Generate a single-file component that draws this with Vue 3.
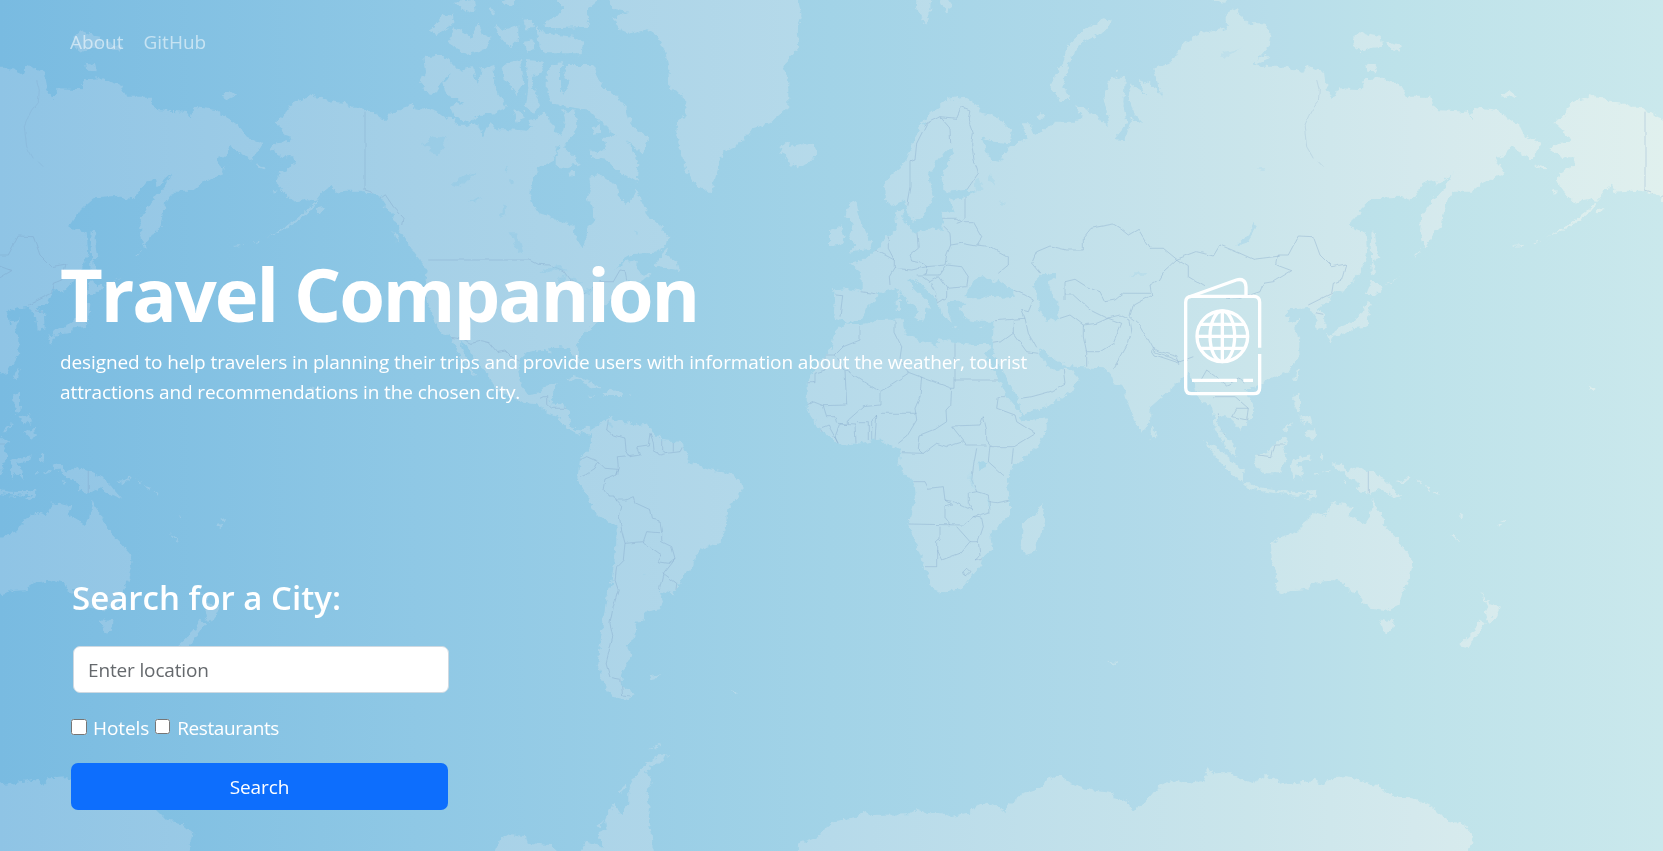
<script setup>
import { ref } from 'vue'

const city = ref('')
const hotels = ref(false)
const restaurants = ref(false)

// Every ring is a list of [dx, dy, points] parts given in thirds of a pixel.
const ring = (...parts) =>
  'M' +
  parts
    .map(([dx, dy, pts]) =>
      pts
        .trim()
        .split(/\s+/)
        .map((p) => {
          const [x, y] = p.split(',').map(Number)
          return `${((x + dx) / 3).toFixed(1)},${((y + dy) / 3).toFixed(1)}`
        })
        .join('L')
    )
    .join('L')

const B = [1200, 0]
const C = [2340, 0]
const D = [3660, 0]
const F = [1440, 1200]
const G = [2340, 1200]
const H = [3600, 1200]
const group = (o, list) => list.map((p) => ring([...o, p])).join(' ')

const land = [
  group(B, [
    // North America
    '-377,366 -360,356 -345,345 -335,320 -315,303 -288,298 -268,282 -252,292 -230,295 -200,305 -170,308 -145,320 -120,320 -100,335 -85,337 -65,352 -45,358 -30,342 0,330 20,322 38,308 45,325 75,330 90,322 110,335 130,350 160,355 175,380 200,380 215,370 240,378 248,412 262,380 275,370 290,388 330,388 380,392 395,380 385,362 410,360 430,335 445,355 455,372 470,395 478,408 490,390 495,360 490,330 525,335 532,370 525,400 500,425 485,445 470,435 462,480 435,495 415,510 395,540 388,580 395,605 412,640 440,645 480,665 520,675 525,710 548,745 560,715 555,690 580,665 578,620 562,600 572,570 568,530 600,525 630,545 650,555 657,590 680,612 700,590 708,570 730,610 745,650 785,685 805,710 800,735 765,758 700,762 670,780 645,808 680,785 710,780 708,805 720,820 755,822 725,845 705,850 690,840 660,855 650,875 655,888 630,900 608,925 590,970 560,995 535,1020 530,1040 540,1065 538,1098 520,1068 510,1050 480,1042 450,1045 455,1058 420,1050 385,1055 360,1075 355,1120 365,1160 385,1185 420,1180 432,1155 470,1150 462,1180 450,1210 480,1213 508,1225 506,1265 525,1290 540,1295 560,1280 575,1292 570,1306 550,1295 535,1303 510,1292 490,1275 475,1250 445,1238 410,1213 370,1208 330,1188 290,1170 275,1150 270,1130 240,1095 215,1060 200,1035 180,1028 195,1070 215,1105 230,1130 215,1120 190,1085 170,1050 152,1012 115,990 100,960 85,910 75,860 80,812 65,790 40,760 20,720 0,690 -15,660 -40,620 -60,590 -90,578 -120,572 -160,572 -195,575 -205,555 -230,575 -250,602 -275,598 -320,605 -345,580 -370,545 -360,515 -335,505 -315,490 -320,472 -350,472 -392,448 -370,430 -330,425 -320,410 -345,405 -355,385',
    '765,800 785,760 805,740 800,765 830,785 835,810 805,805',
    '440,215 460,192 490,190 480,215 480,260 490,285 510,240 490,235 500,195 535,195 580,195 590,225 610,265 650,290 680,330 690,370 745,415 725,460 680,420 700,460 715,490 710,545 650,510 620,480 570,470 570,455 620,450 610,410 650,410 600,360 570,330 500,320 460,310 440,270',
    '130,250 165,205 190,210 220,205 235,260 245,205 280,195 285,265 320,320 280,340 240,345 205,365 160,345 150,320 190,305 140,285',
    '70,170 110,165 140,175 168,205 130,240 110,275 90,285 60,250 75,215',
    '305,200 330,185 360,180 365,220 375,250 350,285 330,255 310,235',
    '380,180 435,185 425,215 395,235 400,260 420,310 405,340 375,320 385,240',
    '410,75 430,100 520,110 550,125 545,160 430,160 415,130',
    '430,75 470,85 560,80 570,50 555,35 590,5 600,-20 440,-20 490,20 470,50 440,60',
    '90,95 120,50 160,38 160,75 110,105',
    '145,130 160,80 210,110 235,65 250,105 275,110 260,145 200,165',
    '285,75 310,90 355,75 355,120 330,145 295,105',
    '370,55 400,60 405,85 375,85',
    '375,125 400,120 400,150 380,155',
    '165,5 225,0 230,30 200,38',
    '270,20 285,40 280,50 268,30',
    '305,0 345,-10 345,20 320,15',
    '470,455 490,435 510,460 540,490 500,505 470,500',
    '575,385 600,375 600,400 580,405',
    '340,335 365,330 378,355 350,365',
    '505,518 525,515 520,528 508,530',
    // Greenland
    '615,-20 640,30 690,35 640,55 655,85 690,100 740,88 775,110 795,150 805,200 808,265 850,285 860,345 835,360 828,400 840,450 860,510 890,560 935,580 950,520 970,455 1010,440 1055,385 1110,370 1165,320 1165,240 1150,200 1195,140 1190,90 1205,50 1190,-20',
    '1138,440 1160,425 1170,440 1210,430 1235,425 1252,460 1225,490 1195,502 1160,485 1165,465 1145,462',
    // Caribbean
    '495,1140 520,1128 570,1145 605,1165 575,1165 545,1142',
    '610,1182 630,1166 670,1180 660,1188 615,1188',
    '565,1183 585,1186 570,1190',
    '685,1183 698,1184 688,1188',
    // Aleutians and coastal islands
    '-205,560 -235,590 -280,645 -345,690 -400,712 -340,680 -290,640 -245,600',
    '-420,722 -440,728 -438,730 -418,725',
    '-470,734 -500,738 -498,740 -468,737',
    '-248,625 -228,620 -235,635 -250,642',
    '-435,495 -405,500 -402,508 -425,503',
    '-385,570 -370,572 -378,582',
    '40,757 85,785 88,797 60,785',
    '-20,690 -8,705 -3,728 -15,715'
  ]),
  group(F, [
    '333,95 350,72 385,62 395,50 405,60 430,65 480,75 505,70 515,90 545,120 600,125 625,165 620,190 640,190 690,208 735,215 780,240 788,265 775,290 745,325 740,385 715,430 680,440 645,465 640,500 610,530 590,570 575,580 540,573 552,605 540,628 495,635 490,662 465,665 468,685 460,720 440,735 457,765 435,800 422,830 430,860 465,885 440,900 400,890 370,850 352,790 365,700 378,600 395,540 408,450 410,380 350,345 320,285 292,235 300,180 332,145',
    '508,828 540,823 530,835 515,838',
    '755,870 770,875 777,885 765,880',
    '30,1380 60,1320 90,1303 135,1308 140,1328 210,1335 265,1380',
    '385,1380 355,1300 380,1290 375,1260 400,1208 425,1245 445,1215 445,1170 470,1125 480,1105 530,1070 570,1062 500,1110 515,1145 500,1180 510,1210 505,1240 515,1300 520,1380',
    '300,1360 320,1325 375,1345 380,1380 300,1380',
    '420,1175 435,1150 440,1165 425,1180',
    '345,1278 372,1265 360,1280',
    '510,1048 540,1032 530,1045'
  ]),
  // Africa
  ring([
    ...C,
    '200,970 235,975 300,960 370,958 375,985 370,1000 400,1015 470,1040 480,1015 530,1030 590,1035 630,1035 615,1062 650,1130 680,1190 720,1240 725,1262 800,1255 800,1290 770,1340 700,1400 680,1435 690,1500 690,1545 630,1600 637,1650 608,1670 600,1700 545,1765 470,1778 452,1750 415,1650 385,1575 405,1500 400,1450 355,1395 362,1350 320,1335 300,1315 240,1330 175,1335 120,1290 80,1230 80,1150 100,1110 155,1045 165,1000 190,975'
  ]),
  // Europe and Asia
  ring(
    [
      ...C,
      '162,868 200,865 245,872 245,820 210,790 245,785 265,765 290,750 320,710 350,690 345,640 370,625 370,660 385,685 410,700 450,685 488,690 485,635 525,640 510,600 555,590 590,575 560,572 495,578 485,520 525,455 510,440 490,460 445,520 450,560 460,590 430,650 400,668 385,640 375,600 340,618 315,600 312,545 370,495 405,410 440,350 500,300 550,290 590,315 600,340 650,350 695,390 690,430 640,425 605,415 630,480 660,485 690,440 740,415 725,370 750,370 765,405 830,365 890,365 910,350 885,315 930,335 990,380 970,290 995,230 1035,230 1030,310 1040,370 1000,418 1035,420 1055,355 1090,370 1060,340 1045,290 1055,250 1100,285 1075,240 1110,250 1145,290 1120,205 1175,190 1200,140 1260,100 1340,85'
    ],
    [
      ...D,
      '20,75 20,40 50,22 80,70 130,70 152,100 145,140 100,190 130,200 200,200 250,222 260,195 315,215 320,260 340,298 355,265 430,268 430,238 480,235 540,255 560,290 630,290 645,330 740,335 755,358 760,320 830,330 900,380 915,410 965,430 935,480 870,435 860,465 830,475 852,522 790,545 755,575 700,575 675,610 665,680 640,700 615,745 600,700 603,650 640,600 675,560 695,520 650,560 645,540 615,545 580,598 540,590 460,595 425,625 385,680 440,700 445,760 420,820 370,875 340,870 325,905 290,925 315,945 317,985 290,990 285,950 265,920 230,925 200,935 210,970 240,955 225,985 238,1020 238,1060 205,1115 130,1145 75,1170 100,1210 103,1250 60,1290 40,1265 15,1245 0,1250 -10,1275 15,1310 40,1330 48,1370 20,1345 5,1310 -15,1290 -20,1240 -30,1210 -55,1210'
    ],
    [
      ...C,
      '1245,1150 1225,1120 1200,1140 1170,1170 1112,1220 1110,1270 1085,1298 1060,1250 1040,1200 1030,1155 1000,1150 990,1115 970,1105 880,1100 850,1095 800,1060 775,1045 790,1085 830,1115 860,1100 895,1135 880,1170 820,1210 725,1245 715,1200 680,1130 650,1085 635,1040 640,1000 640,965 600,965 560,960 540,925 560,905 540,905 500,905 515,965 490,950 470,900 430,860 395,832 385,845 440,900 455,930 435,925 435,950 400,950 420,935 390,910 350,865 330,870 295,880 285,900 260,920 250,950 200,968 160,955 165,900'
    ]
  ),
  group(C, [
    '205,615 230,605 235,640 250,680 275,730 270,750 205,758 225,735 208,710 220,670 195,650',
    '150,695 185,675 197,710 180,735 150,738',
    '405,5 420,-20 455,-20 450,30 435,75 420,45',
    '480,0 490,-20 515,15 500,40',
    '810,265 825,225 850,190 860,140 910,90 970,58 992,62 985,88 900,130 865,190 850,260 870,300 840,300',
    '773,350 783,338 793,348 785,360',
    '1005,212 1015,205 1020,215 1010,220',
    '350,900 360,897 360,930 350,930',
    '352,880 358,872 360,892',
    '398,952 435,948 425,965',
    '510,982 535,982 530,988',
    '590,980 612,975 600,985'
  ]),
  group(D, [
    '-30,-20 30,-20 10,8 -20,5',
    '400,110 420,93 450,105 482,110 487,140 450,145 425,157 405,142',
    '498,126 545,138 542,155 510,147',
    '438,188 465,193 470,214 442,212',
    '842,290 870,270 889,285 860,297',
    '105,180 140,165 148,175 110,190',
    '455,690 465,700 475,775 460,780 465,820 455,822 452,740',
    '455,840 488,865 465,885 438,885',
    '440,905 452,910 440,980 400,985 380,1000 335,1008 345,990 390,970 425,940',
    '322,1005 340,1010 335,1032',
    '355,997 370,995 365,1005',
    '222,1140 232,1105 238,1110 230,1140',
    '220,1185 240,1180 240,1225 235,1240 220,1210',
    '72,1165 95,1158 90,1170',
    '945,493 975,500 972,510',
    '488,860 515,845 545,826 515,848',
    '585,765 605,748 590,768',
    '1108,1160 1127,1168 1115,1177'
  ]),
  group(G, [
    '1112,80 1130,95 1128,118 1112,115',
    '785,315 795,350 780,410 762,458 740,465 722,440 730,365 765,345',
    '988,783 1012,785 1002,797',
    '45,1360 60,1330 125,1305 135,1285 170,1260 235,1250 250,1232 270,1245 390,1243 415,1230 445,1240 490,1240 515,1252 565,1240 585,1220 620,1205 665,1225 675,1240 685,1215 730,1180 790,1160 800,1140 835,1127 865,1145 930,1170 1000,1180 1005,1195 1045,1205 1055,1232 1090,1215 1130,1165 1180,1140 1215,1150 1270,1143 1285,1105 1300,1120 1350,1120 1370,1130 1420,1150 1460,1125 1510,1155 1605,1140 1630,1155 1645,1135 1700,1132 1790,1155 1840,1190 1900,1192 1960,1222 2000,1262 2040,1268 2080,1302 2065,1360 2065,1400 20,1400'
  ]),
  group(H, [
    '15,122 45,140 100,185 130,210 128,245 95,225 55,180',
    '128,250 150,250 180,262 225,268 228,280 180,272 135,262',
    '232,270 270,275 310,276 350,272 345,281 290,284 232,279',
    '315,295 345,278 352,284 325,300',
    '268,286 290,290 285,295',
    '162,165 200,160 245,110 268,125 250,140 262,170 240,220 200,220 170,205',
    '278,180 332,166 327,182 288,190 302,200 308,240 288,217 282,242 270,210',
    '395,190 425,192 430,208 440,215 470,200 510,215 550,235 575,260 605,297 570,285 540,265 510,282 470,270 480,250 440,230 410,205',
    '585,243 615,240 626,225 632,235 612,250',
    '305,100 330,95 345,80 348,105 335,122 320,105',
    '298,50 330,43 337,72 320,62 312,74',
    '286,20 298,25 298,38 288,35',
    '250,92 275,66 274,76 254,96',
    '360,165 370,158 368,185 360,180',
    '362,213 392,214 390,221',
    '345,217 355,216 352,223',
    '428,240 436,242 434,256',
    '125,207 135,206 133,215',
    '213,430 245,410 295,395 310,365 350,335 380,345 400,310 455,318 445,345 495,375 508,355 518,297 530,330 545,345 560,385 600,425 632,465 637,500 625,545 605,580 598,615 560,632 540,628 500,622 480,590 470,570 450,580 435,550 400,540 345,548 315,568 280,570 245,583 228,575 232,540 215,480',
    '388,306 410,303 405,310',
    '540,658 560,665 582,660 575,690 562,700 550,690',
    '842,575 870,610 900,620 888,645 870,670 858,652 855,640 865,620',
    '840,660 857,670 835,700 805,745 775,738 820,695',
    '750,403 762,407 782,427 768,421',
    '648,238 660,244 664,254',
    '670,258 692,262 690,270',
    '698,270 718,283 714,288',
    '888,376 907,371 902,384',
    '903,363 919,356 914,367',
    '775,343 787,350 782,356'
  ])
].join(' ')

const seas = [
  group(C, [
    '556,892 580,840 610,825 640,850 655,840 700,870 708,890 650,895 600,892',
    '760,850 790,820 825,815 825,835 800,850 820,890 835,910 835,960 800,962 780,930'
  ]),
  group(D, ['48,738 85,705 103,665 110,680 80,728']),
  group(G, ['595,185 622,183 620,205 598,208'])
].join(' ')

const lakes = [
  group(B, [
    '65,435 100,410 140,415 130,440 110,465 85,455 95,440',
    '155,555 180,530 230,515 195,548 170,562',
    '200,610 230,592 248,596 215,605',
    '325,700 350,700 370,755 355,760 340,720',
    '418,818 445,798 485,795 500,812 465,808 440,820',
    '470,865 480,830 500,825 490,860',
    '505,830 545,845 540,870 520,850',
    '538,880 562,868 580,862 560,885',
    '700,695 718,692 712,702',
    '310,510 325,500 320,515',
    '330,540 340,545 332,552',
    '300,650 312,610 320,620 308,655'
  ]),
  group(C, [
    '1045,835 1060,820 1105,820 1100,827 1060,828',
    '580,545 600,540 608,565 590,575',
    '628,520 645,540 640,555 628,540',
    '655,600 675,610 665,615'
  ]),
  group(D, ['115,500 138,510 120,520', '0,160 60,145 40,160 10,175']),
  group(G, ['570,215 575,245 588,270 580,262 568,240', '622,290 630,300 632,335 625,315']),
  group(F, ['385,68 400,72 398,84 390,82', '485,520 495,522 490,528'])
].join(' ')

const borders = [
  group(B, [
    '-105,335 -105,570 -88,575 -68,600 -45,583 -20,620 12,655 8,675',
    '85,780 390,780 415,793 450,795 490,812 510,840 545,865 552,882 575,865 600,845 640,845 660,810 675,812 680,838',
    '150,1012 190,1018 215,1030 245,1022 268,1028 290,1055 315,1050 340,1075 358,1082',
    '420,1195 430,1190 440,1190 440,1210 455,1225 475,1225 505,1225'
  ]),
  group(F, [
    '385,62 380,90 400,105 435,115 438,150 450,170 480,165 470,140 505,135 510,100',
    '438,168 412,170 415,205 405,228 375,240 370,265 385,288 405,288 408,300 435,300 460,290 465,308 512,330 518,358 540,362 545,400 545,425 575,440 585,475 565,490 535,485 545,465 495,430 490,425 500,395 540,398',
    '300,180 320,170 355,185 375,205 412,208 410,225',
    '355,185 345,205 315,225 300,232',
    '408,300 425,320 418,350 425,390 435,430 490,425',
    '435,430 430,480 410,500 405,540 415,570 400,620 390,670 398,710 378,790 390,832 422,838 428,885 450,888',
    '585,475 550,520 590,550 588,570',
    '550,520 538,570',
    '510,100 520,125 522,155 540,165 560,160 600,155 608,140',
    '545,122 545,150 560,160',
    '580,125 580,155'
  ]),
  group(C, [
    '555,590 555,625 555,655 545,665 580,665 605,710 590,735 630,740 685,770 685,795 655,820',
    '410,690 415,745 390,765 395,780 430,788 440,800 495,795 500,765 512,735 510,700 490,680',
    '512,735 545,730 590,738',
    '325,710 325,745 343,780 343,805 328,830 330,855',
    '343,805 395,810 440,800 435,825 410,825',
    '285,750 325,770 343,780',
    '435,825 480,825 500,795 545,800 565,830 560,860 500,865 475,830 450,845 430,830',
    '500,865 500,890 470,910 470,880 455,850',
    '245,875 290,882',
    '165,885 188,887 180,950',
    '380,615 390,560 390,485 405,480 410,430 440,370 480,350 510,385 512,435',
    '480,350 530,355 545,320 570,330 565,360 580,400 575,430 582,480 595,520 560,570',
    '485,655 530,655 545,665 530,670',
    '780,820 755,790 770,755 810,738 860,750 910,750 910,710 930,685 1000,672 1020,685 1045,705 1075,688 1110,745 1150,745 1190,778 1250,755 1300,768 1320,735 1380,760 1420,778 1500,768',
    '1190,778 1150,815 1135,840 1110,855 1115,885 1060,915 1050,950 1080,975 1100,1010 1125,1055 1200,1085 1240,1070',
    '1190,778 1225,800 1225,830 1275,860',
    '855,900 855,845 885,838 920,860 960,875 975,905 1005,900 1030,880 1110,880',
    '855,885 880,885 930,930 980,955 1020,945 1050,960',
    '840,955 870,945 910,975 910,1010 920,1060 920,1100',
    '910,975 950,970 985,955 1025,970 1000,1030 960,1055 920,1055',
    '1050,960 1055,990 1045,1030 1000,1110',
    '1120,1045 1140,1055 1190,1070 1200,1090 1125,1065 1115,1050',
    '700,870 735,885 760,900 745,935 725,930 735,955 645,962',
    '735,955 745,1000 770,1045',
    '700,962 700,1000 665,1025 635,1030',
    '700,1000 740,1055 775,1060',
    '720,1195 755,1190 810,1175 855,1150 850,1110',
    '345,958 345,1000 365,1040 360,1075 380,1115 420,1130 515,1165 525,1165 525,1030',
    '525,1140 655,1140',
    '240,980 240,1020 190,1040 165,1065 190,1105 300,1175 385,1120',
    '80,1148 105,1148 105,1120 135,1110 135,1065 165,1065',
    '195,1110 200,1215 130,1217 100,1205 80,1215',
    '300,1175 300,1215 250,1220 205,1260 205,1272 170,1270 165,1250 140,1250 130,1217',
    '425,1130 420,1190 405,1225 410,1260 380,1310 355,1330',
    '515,1165 512,1215 498,1230 500,1265 470,1285 420,1305 415,1345 430,1360 365,1358',
    '300,1240 410,1240',
    '515,1278 600,1275 610,1250 620,1290 620,1320 635,1340 700,1340 765,1300 710,1265 705,1245 650,1225 655,1190 675,1190',
    '515,1278 560,1335 620,1335',
    '430,1360 470,1330 500,1340 550,1325',
    '590,1345 580,1400 575,1440 590,1475 565,1480 565,1510 575,1530 520,1505 495,1500 490,1460 445,1465 435,1445 400,1445',
    '630,1335 625,1385 675,1430',
    '625,1505 650,1508 690,1500',
    '590,1475 625,1485 630,1535 580,1550 550,1575 385,1572',
    '495,1500 515,1515 495,1520 495,1555 510,1575',
    '480,1580 480,1620 470,1625 470,1700 435,1700',
    '470,1650 485,1680 540,1660 570,1625 530,1580',
    '570,1625 595,1625 610,1580 605,1555 580,1550',
    '595,1625 600,1665 588,1680 605,1675',
    '550,1715 560,1705 570,1715 555,1728 550,1715',
    '700,1345 695,1395',
    '140,1320 120,1285 145,1275 175,1330',
    '175,1335 165,1310 180,1272 225,1275 228,1330',
    '228,1265 265,1265 265,1320',
    '275,1320 275,1265 290,1245 285,1320'
  ]),
  group(D, [
    '175,765 170,795 215,812 160,845 130,850 120,875 60,895 0,890',
    '175,765 205,765 235,708 280,710 300,765 335,800 378,792 365,840 340,850 335,880 265,915',
    '285,935 310,940',
    '-60,1145 -40,1110 -20,1125 20,1155 60,1135 75,1150',
    '-20,1190 45,1190 85,1225 80,1260 35,1250 50,1225 85,1225'
  ]),
  group(H, ['170,165 215,170 225,135 255,135', '505,212 505,280', '55,40 60,80 80,115'])
].join(' ')

const river = group(D, ['290,240 298,270 295,305 275,330 265,350 253,380 260,440 280,475', '295,485 310,500'])
</script>

<template>
  <main class="page">
    <svg class="map" viewBox="0 0 1663 851" preserveAspectRatio="none" aria-hidden="true">
      <defs>
        <linearGradient id="sea">
          <stop offset="0" stop-color="#79bbe1" />
          <stop offset="0.25" stop-color="#8fc8e5" />
          <stop offset="0.5" stop-color="#a2d3e7" />
          <stop offset="0.75" stop-color="#b6dcea" />
          <stop offset="0.84" stop-color="#bde2ea" />
          <stop offset="1" stop-color="#cae8ec" />
        </linearGradient>
        <linearGradient id="ground">
          <stop offset="0" stop-color="#8fc4e5" />
          <stop offset="0.25" stop-color="#a5d0e7" />
          <stop offset="0.5" stop-color="#b6daea" />
          <stop offset="0.75" stop-color="#cae5eb" />
          <stop offset="0.85" stop-color="#d4e9ed" />
          <stop offset="1" stop-color="#e0f0ee" />
        </linearGradient>
        <filter id="coast" x="-1300" y="-20" width="4300" height="900" filterUnits="userSpaceOnUse" color-interpolation-filters="sRGB">
          <feTurbulence type="fractalNoise" baseFrequency="0.17" numOctaves="3" seed="4" />
          <feDisplacementMap in="SourceGraphic" scale="7" xChannelSelector="R" yChannelSelector="G" />
          <feGaussianBlur stdDeviation="0.45" />
        </filter>
        <filter id="wobble" x="-1300" y="-20" width="4300" height="900" filterUnits="userSpaceOnUse" color-interpolation-filters="sRGB">
          <feTurbulence type="fractalNoise" baseFrequency="0.12" numOctaves="1" seed="4" />
          <feDisplacementMap in="SourceGraphic" scale="4" xChannelSelector="R" yChannelSelector="G" />
        </filter>
        <g id="world">
          <path :d="land" fill="#fff" />
          <path :d="lakes" fill="#777" />
          <path :d="seas" fill="#000" />
        </g>
        <g id="frontiers">
          <path :d="borders" />
          <path :d="river" opacity="0.6" />
        </g>
        <mask id="continents" maskUnits="userSpaceOnUse" x="0" y="0" width="1663" height="851">
          <g filter="url(#coast)">
            <use href="#world" x="-1280" />
            <use href="#world" />
            <use href="#world" x="1280" />
          </g>
        </mask>
      </defs>
      <rect width="1663" height="851" fill="url(#sea)" />
      <g mask="url(#continents)">
        <rect width="1663" height="851" fill="url(#ground)" />
        <g class="frontiers" filter="url(#wobble)">
          <use href="#frontiers" x="-1280" />
          <use href="#frontiers" />
          <use href="#frontiers" x="1280" />
        </g>
      </g>
    </svg>

    <div class="content">
      <nav class="nav">
        <a>About</a>
        <a>GitHub</a>
      </nav>

      <header class="hero">
        <div class="intro">
          <h1>Travel Companion</h1>
          <p>
            <span class="line">designed to help travelers in planning their trips and provide users with information about the weather, tourist</span>
            <span class="line">attractions and recommendations in the chosen city.</span>
          </p>
        </div>
        <svg class="passport" viewBox="0 0 360 420" aria-hidden="true">
          <path d="M284 248V112Q284 94 266 94H80Q62 94 62 112V368Q62 386 80 386H266Q284 386 284 368V267" />
          <path d="M72 96L214 45Q242 38 243 66V92" />
          <circle cx="172" cy="214" r="76" />
          <ellipse cx="172" cy="214" rx="37" ry="76" />
          <path d="M172 138V290M104 178H240M96 214H248M104 250H240" />
          <path d="M81 346H216M235 346H264" />
        </svg>
      </header>

      <form class="search" @submit.prevent>
        <h2>Search for a City:</h2>
        <input v-model="city" class="field" type="text" placeholder="Enter location" />
        <div class="options">
          <input id="hotels" v-model="hotels" type="checkbox" />
          <label for="hotels">Hotels</label>
          <input id="restaurants" v-model="restaurants" class="small" type="checkbox" />
          <label class="tight" for="restaurants">Restaurants</label>
        </div>
        <button type="submit">Search</button>
      </form>
    </div>
  </main>
</template>

<style>
body {
  margin: 0;
  overflow: hidden;
}
</style>

<style scoped>
.page {
  position: relative;
  height: 851px;
  overflow: hidden;
  font-family: 'Open Sans', 'Noto Sans', sans-serif;
  font-size: 19px;
  color: #fff;
}
.map {
  position: absolute;
  inset: 0;
  width: 100%;
  height: 100%;
}
.frontiers {
  fill: none;
  stroke: #7c9fc4;
  stroke-opacity: 0.34;
  stroke-width: 1;
}
.content {
  position: relative;
  display: flex;
  flex-direction: column;
}
.nav {
  display: flex;
  gap: 20px;
  height: 83px;
  padding: 0 0 1px 70px;
  align-items: center;
  color: rgba(255, 255, 255, 0.55);
  font-weight: 500;
}
.hero {
  display: flex;
  justify-content: space-between;
  height: 486px;
  padding: 0 378px 0 60px;
}
.intro {
  padding-top: 157px;
}
h1 {
  margin: 0;
  font-size: 74px;
  line-height: 106px;
  font-weight: 700;
  white-space: nowrap;
  letter-spacing: -2.1px;
}
.intro p {
  margin: 0;
  line-height: 30px;
  font-weight: 500;
  letter-spacing: -0.1px;
}
.line {
  display: block;
  white-space: nowrap;
}
.passport {
  width: 120px;
  height: 140px;
  margin-top: 181px;
  fill: none;
  stroke: #fff;
  stroke-width: 10;
}
.search {
  width: 379px;
  padding-left: 71px;
}
h2 {
  margin: 0 0 0 1px;
  height: 76px;
  font-size: 33px;
  line-height: 55px;
  font-weight: 600;
  white-space: nowrap;
}
.field {
  display: block;
  box-sizing: border-box;
  width: 376px;
  height: 47px;
  margin: 0 0 0 2px;
  padding: 0 14px;
  border: 1px solid #ced9e2;
  border-radius: 7px;
  background: #fff;
  font: inherit;
  letter-spacing: -0.15px;
  color: #212529;
}
.field::placeholder {
  color: #65696d;
  opacity: 1;
}
.options {
  display: flex;
  align-items: center;
  height: 70px;
}
.options label {
  letter-spacing: -0.1px;
  font-weight: 500;
}
.options .tight {
  letter-spacing: -0.4px;
}
.options input {
  width: 16px;
  height: 16px;
  margin: 0 6px 3px 0;
}
.options .small {
  width: 15px;
  height: 15px;
  margin: 0 7px 3px 6px;
}
button {
  width: 377px;
  height: 47px;
  padding: 0;
  border: 0;
  border-radius: 7px;
  background: #0d6efd;
  font: inherit;
  letter-spacing: -0.1px;
  color: #fff;
}
</style>
